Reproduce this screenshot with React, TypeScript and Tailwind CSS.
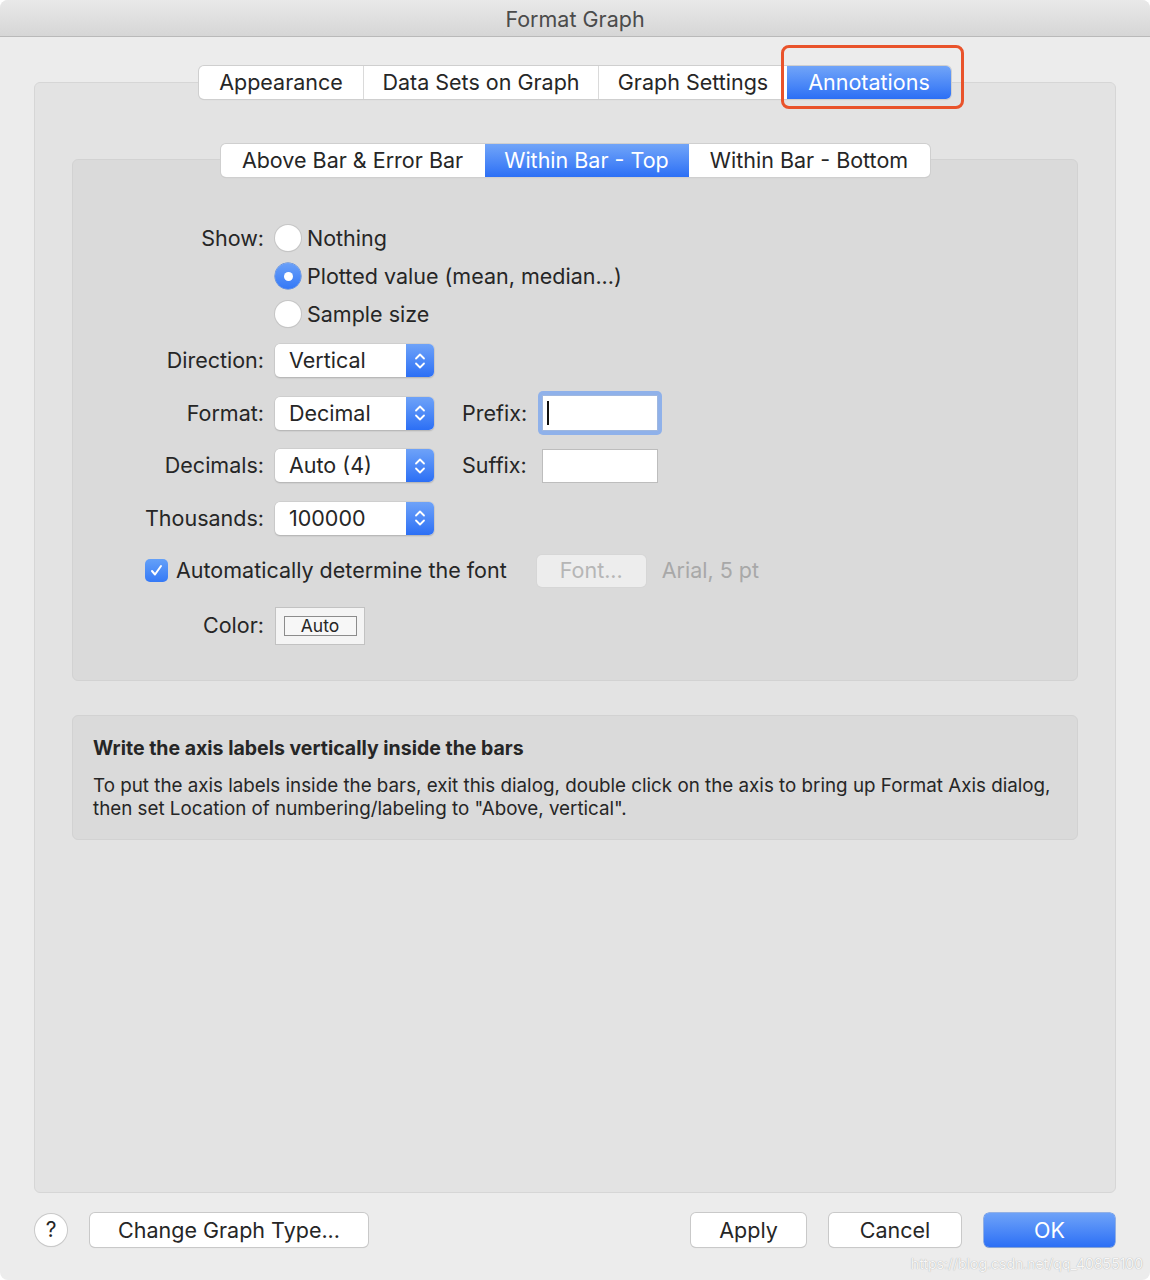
import type { ReactNode } from "react";

const font = { fontFamily: "Inter, 'Noto Sans', 'Liberation Sans', sans-serif" };

type Seg = { label: string; w: number; active?: boolean };

function Segmented({ items }: { items: Seg[] }) {
  return (
    <div className="flex h-[33px] rounded-[5px] bg-white shadow-[0_0_0_1px_#cfcfcf,0_1px_1px_rgba(0,0,0,0.12)] overflow-hidden">
      {items.map((it, i) => (
        <div
          key={it.label}
          style={{ width: it.w }}
          className={
            it.active
              ? "flex items-center justify-center bg-gradient-to-b from-[#71a4f8] to-[#2c6ff5] text-white text-[21.5px]"
              : `flex items-center justify-center text-[#262626] text-[21.5px] ${i > 0 && !items[i - 1].active ? "border-l border-[#dadada]" : ""}`
          }
        >
          {it.label}
        </div>
      ))}
    </div>
  );
}

function Chevrons() {
  return (
    <svg width="12" height="20" viewBox="0 0 12 20" fill="none" stroke="white" strokeWidth="1.8" strokeLinecap="round" strokeLinejoin="round">
      <path d="M2 7.5 6 3.5l4 4" />
      <path d="M2 12.5l4 4 4-4" />
    </svg>
  );
}

function PopUp({ value }: { value: string }) {
  return (
    <div className="flex h-[33px] w-[159px] rounded-[5px] bg-white shadow-[0_0_0_0.5px_#c4c4c4,0_1px_1.5px_rgba(0,0,0,0.25)] overflow-hidden">
      <div className="flex-1 pl-[14px] flex items-center text-[21.5px] text-[#262626]">{value}</div>
      <div className="w-[28px] flex items-center justify-center bg-gradient-to-b from-[#6ea2f8] to-[#2c6ff5]">
        <Chevrons />
      </div>
    </div>
  );
}

function Radio({ checked, label }: { checked?: boolean; label: string }) {
  return (
    <div className="flex items-center h-[38px] gap-[6px]">
      {checked ? (
        <div className="w-[26px] h-[26px] rounded-full bg-gradient-to-b from-[#6aa0f8] to-[#3478f6] flex items-center justify-center shadow-[0_0_0_0.5px_#3a74d8]">
          <div className="w-[9px] h-[9px] rounded-full bg-white" />
        </div>
      ) : (
        <div className="w-[26px] h-[26px] rounded-full bg-white shadow-[0_0_0_1px_#c6c6c6,0_1px_1px_rgba(0,0,0,0.12)]" />
      )}
      <span className="text-[21.5px] text-[#262626]">{label}</span>
    </div>
  );
}

function Row({ label, children, h = "h-[33px]" }: { label: string; children: ReactNode; h?: string }) {
  return (
    <div className={`flex items-center ${h}`}>
      <div className="w-[202px] pr-[11px] text-right text-[21.5px] text-[#262626]">{label}</div>
      {children}
    </div>
  );
}

function Button({ children, w, primary }: { children: ReactNode; w: number; primary?: boolean }) {
  return (
    <div
      style={{ width: w }}
      className={
        primary
          ? "h-[34px] rounded-[5px] flex items-center justify-center text-[21.5px] text-white bg-gradient-to-b from-[#6ea2f8] to-[#2c6ff5] shadow-[0_0_0_0.5px_#3b76dd,0_1px_1px_rgba(0,0,0,0.15)]"
          : "h-[34px] rounded-[5px] flex items-center justify-center text-[21.5px] text-[#262626] bg-white shadow-[0_0_0_1px_#c9c9c9,0_1px_1px_rgba(0,0,0,0.15)]"
      }
    >
      {children}
    </div>
  );
}

export default function App() {
  return (
    <div style={font} className="relative w-[1150px] h-[1280px] bg-[#ececec] flex flex-col overflow-hidden rounded-[8px]">
      <div className="h-[37px] shrink-0 border-b border-[#b9b9b9] bg-gradient-to-b from-[#e9e9e9] to-[#d6d6d6] flex items-center justify-center pt-[2px] text-[21.5px] text-[#4b4b4b]">
        Format Graph
      </div>

      <div className="px-[34px]">
        <div className="mt-[45px] h-[1111px] rounded-[6px] border border-[#d6d6d6] bg-[#e3e3e3] flex flex-col">
          <div className="-mt-[17px] flex justify-center">
            <Segmented
              items={[
                { label: "Appearance", w: 164 },
                { label: "Data Sets on Graph", w: 235 },
                { label: "Graph Settings", w: 189 },
                { label: "Annotations", w: 164, active: true },
              ]}
            />
          </div>

          <div className="mt-[60px] mx-[37px] h-[522px] rounded-[6px] border border-[#d2d2d2] bg-[#dadada] flex flex-col">
            <div className="-mt-[16px] flex justify-center">
              <Segmented
                items={[
                  { label: "Above Bar & Error Bar", w: 264 },
                  { label: "Within Bar - Top", w: 204, active: true },
                  { label: "Within Bar - Bottom", w: 241 },
                ]}
              />
            </div>

            <div className="mt-[42px] flex flex-col">
              <div className="flex">
                <div className="w-[202px] pr-[11px] h-[38px] flex items-center justify-end text-[21.5px] text-[#262626]">Show:</div>
                <div className="flex flex-col">
                  <Radio label="Nothing" />
                  <Radio label="Plotted value (mean, median...)" checked />
                  <Radio label="Sample size" />
                </div>
              </div>

              <div className="mt-[11px] flex flex-col gap-[19.5px]">
                <Row label="Direction:">
                  <PopUp value="Vertical" />
                </Row>
                <Row label="Format:">
                  <PopUp value="Decimal" />
                  <span className="ml-[28px] text-[21.5px] text-[#262626]">Prefix:</span>
                  <div className="ml-[11px] p-[4px] rounded-[5px] bg-[#8fb1ea]">
                    <div className="w-[116px] h-[36px] bg-white border border-[#9fb7df] flex items-center pl-[4px]">
                      <div className="w-[2px] h-[24px] bg-[#111]" />
                    </div>
                  </div>
                </Row>
                <Row label="Decimals:">
                  <PopUp value="Auto (4)" />
                  <span className="ml-[28px] text-[21.5px] text-[#262626]">Suffix:</span>
                  <div className="ml-[15px] w-[116px] h-[34px] bg-white border border-[#bdbdbd]" />
                </Row>
                <Row label="Thousands:">
                  <PopUp value="100000" />
                </Row>
                <div className="flex items-center h-[33px] pl-[72px]">
                  <div className="w-[23px] h-[23px] rounded-[5px] bg-gradient-to-b from-[#64a0f8] to-[#3579f6] flex items-center justify-center">
                    <svg width="15" height="15" viewBox="0 0 15 15" fill="none" stroke="white" strokeWidth="2" strokeLinecap="round" strokeLinejoin="round">
                      <path d="M3 8l3 3.5L12 3" />
                    </svg>
                  </div>
                  <span className="ml-[8px] text-[21.5px] text-[#262626]">Automatically determine the font</span>
                  <div className="ml-[30px] w-[109px] h-[32px] rounded-[5px] bg-[#ededed] shadow-[0_0_0_1px_#d6d6d6] flex items-center justify-center text-[21.5px] text-[#b6b6b6]">
                    Font...
                  </div>
                  <span className="ml-[16px] text-[21.5px] text-[#a8a8a8]">Arial, 5 pt</span>
                </div>
                <Row label="Color:" h="h-[38px]">
                  <div className="w-[90px] h-[38px] bg-[#f4f4f4] border border-[#c2c2c2] flex items-center justify-center">
                    <div className="w-[73px] h-[20px] border-[1.5px] border-[#8c8c8c] bg-[#f7f7f7] flex items-center justify-center text-[17.5px] text-[#262626] leading-none">
                      Auto
                    </div>
                  </div>
                </Row>
              </div>
            </div>
          </div>

          <div className="mt-[34px] mx-[37px] h-[125px] rounded-[6px] border border-[#d2d2d2] bg-[#dadada] px-[20px] pt-[20px]">
            <div className="text-[19.5px] font-bold leading-[24px] text-[#262626]">
              Write the axis labels vertically inside the bars
            </div>
            <div className="mt-[14px] text-[18.8px] leading-[23px] text-[#262626]">
              To put the axis labels inside the bars, exit this dialog, double click on the axis to bring up Format Axis dialog,
              <br />
              then set Location of numbering/labeling to "Above, vertical".
            </div>
          </div>
        </div>
      </div>

      <div className="mt-[20px] px-[35px] flex items-center">
        <div className="w-[32px] h-[32px] rounded-full bg-white shadow-[0_0_0_1px_#c9c9c9,0_1px_1px_rgba(0,0,0,0.15)] flex items-center justify-center text-[21px] text-[#262626]">
          ?
        </div>
        <div className="ml-[23px]">
          <Button w={278}>Change Graph Type...</Button>
        </div>
        <div className="ml-auto flex gap-[23px]">
          <Button w={115}>Apply</Button>
          <Button w={132}>Cancel</Button>
          <Button w={131} primary>OK</Button>
        </div>
      </div>

      {/* red highlight drawn over the Annotations tab */}
      <div className="absolute left-[781px] top-[45px] w-[183px] h-[64px] rounded-[8px] border-[3px] border-[#e9532b]" />

      <div className="absolute right-[7px] bottom-[6px] text-[14px] text-[#f7f7f7] [text-shadow:0_0_1px_#9a9a9a]">
        https://blog.csdn.net/qq_40855100
      </div>
    </div>
  );
}
